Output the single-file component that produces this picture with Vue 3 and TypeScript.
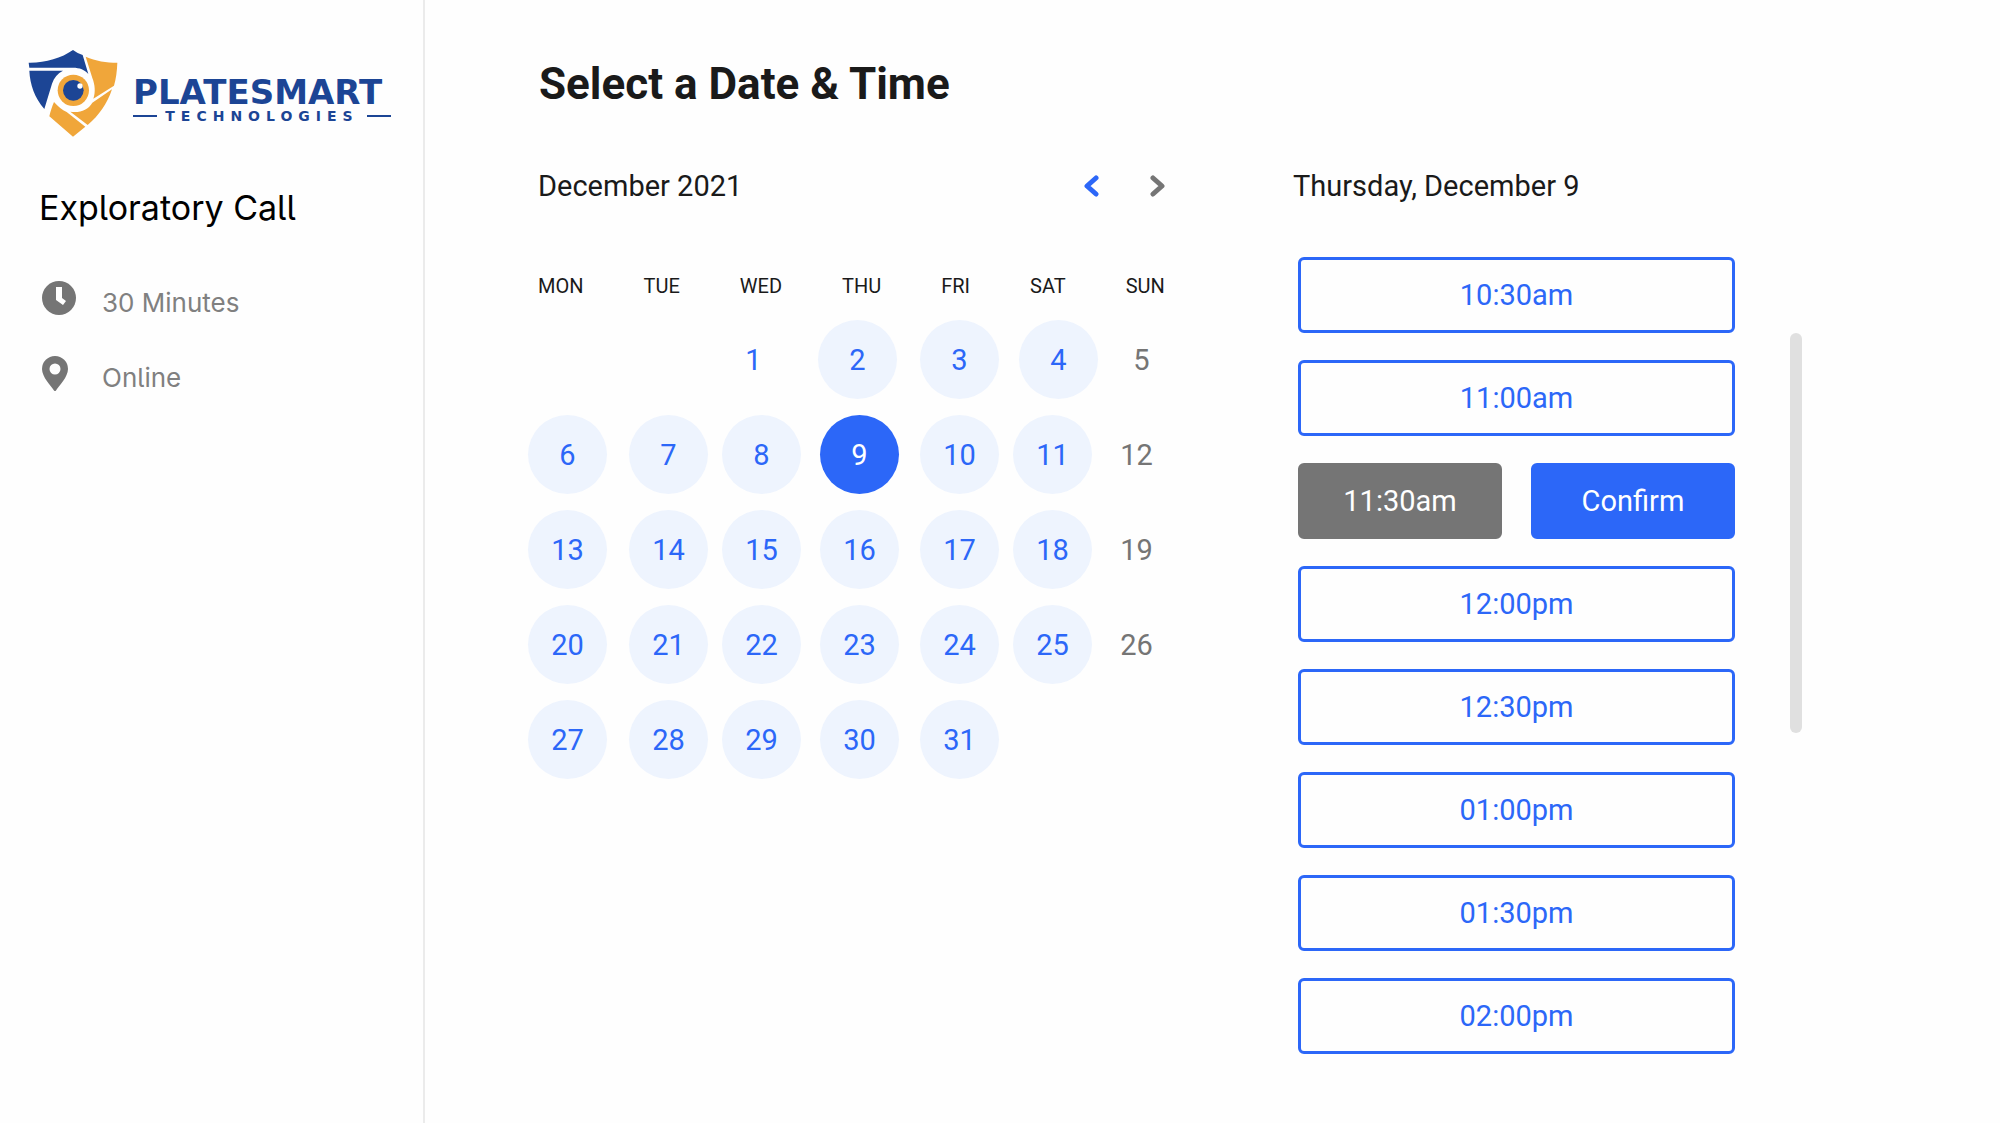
<script setup lang="ts">
import { ref } from 'vue'

interface Day {
  date: number
  state: 'empty' | 'plain' | 'open' | 'closed'
}

const weekdays = ['MON', 'TUE', 'WED', 'THU', 'FRI', 'SAT', 'SUN']
const slots = ['10:30am', '11:00am', '11:30am', '12:00pm', '12:30pm', '01:00pm', '01:30pm', '02:00pm']

const selectedDay = ref(9)
const selectedSlot = ref('11:30am')

// December 2021 starts on a Wednesday, so the first cell is 29 November.
function dayAt(week: number, column: number): Day {
  const date = week * 7 + column - 1
  if (date < 1 || date > 31) return { date, state: 'empty' }
  if (column === 6) return { date, state: 'closed' }
  return { date, state: date === 1 ? 'plain' : 'open' }
}

const weeks: Day[][] = [0, 1, 2, 3, 4].map((week) => weekdays.map((_, column) => dayAt(week, column)))
</script>

<template>
  <div class="page">
    <aside class="sidebar">
      <div class="brand">
        <svg class="shield" viewBox="50 55 279 270" aria-hidden="true">
          <g fill="#1c4595">
            <path d="M55 99C104 100 152 86 188 61C197 68 207 73 217 76L234 133C223 120 208 114 188 114H57Z" />
            <path d="M57 123H158C142 131 131 144 125 162L102 238C73 204 59 165 57 123Z" />
          </g>
          <g fill="#f0a63a">
            <path d="M226 81C256 94 288 99 321 99C320 125 317 147 311 168L249 207C256 188 254 165 246 145Z" />
            <path d="M305 179C290 224 266 257 232 286L180 246C209 250 232 242 246 219Z" />
            <path d="M131 217C144 232 155 240 169 247L225 291L188 321L117 260C120 246 125 231 131 217Z" />
            <circle cx="189" cy="182" r="47" />
          </g>
          <circle cx="189" cy="182" r="31" fill="#1c4595" />
          <circle cx="209" cy="169" r="8" fill="#fff" />
        </svg>
        <div class="wordmark">
          <span class="name">PLATESMART</span>
          <span class="tagline">TECHNOLOGIES</span>
        </div>
      </div>
      <h2 class="event">Exploratory Call</h2>
      <ul class="facts">
        <li>
          <svg width="34" height="34" viewBox="0 0 34 34" aria-hidden="true">
            <circle cx="17" cy="17" r="17" fill="#757575" />
            <path d="M14 6H20V17L24 20L21 24L14 19Z" fill="#fff" />
          </svg>
          <span>30 Minutes</span>
        </li>
        <li>
          <svg width="34" height="35" viewBox="0 0 34 35" aria-hidden="true">
            <path
              fill="#757575"
              fill-rule="evenodd"
              d="M13 0A13 13 0 0 1 26 13C26 21 17 30 14 34.400Q13 35.400 12 34.400C9 30 0 21 0 13A13 13 0 0 1 13 0ZM13 7.500A5.500 5.500 0 1 0 13 18.500A5.500 5.500 0 1 0 13 7.500Z"
            />
          </svg>
          <span>Online</span>
        </li>
      </ul>
    </aside>

    <main class="content">
      <h1 class="title">Select a Date &amp; Time</h1>
      <div class="panels">
        <section class="calendar">
          <header class="month">
            <h2 class="subtitle">December 2021</h2>
            <div class="arrows">
              <button type="button" class="prev" aria-label="Previous month">
                <svg width="15" height="22" viewBox="0 0 15 22"><path d="M12 3L3 11L12 19" /></svg>
              </button>
              <button type="button" class="next" aria-label="Next month">
                <svg width="15" height="22" viewBox="0 0 15 22"><path d="M3 3L12 11L3 19" /></svg>
              </button>
            </div>
          </header>
          <table>
            <thead>
              <tr class="weekdays">
                <th v-for="name in weekdays" :key="name" scope="col">{{ name }}</th>
              </tr>
            </thead>
            <tbody>
              <tr v-for="(week, index) in weeks" :key="index" class="week" :class="{ first: index === 0 }">
                <td v-for="day in week" :key="day.date">
                  <button
                    v-if="day.state !== 'empty'"
                    type="button"
                    class="day"
                    :class="[day.state, { selected: day.date === selectedDay }]"
                    :disabled="day.state === 'closed'"
                    @click="selectedDay = day.date"
                  >
                    {{ day.date }}
                  </button>
                </td>
              </tr>
            </tbody>
          </table>
        </section>

        <section class="times">
          <h2 class="subtitle">Thursday, December {{ selectedDay }}</h2>
          <div class="scroller">
            <ul class="slots">
              <li v-for="slot in slots" :key="slot">
                <template v-if="slot === selectedSlot">
                  <button type="button" class="slot chosen">{{ slot }}</button>
                  <button type="button" class="slot confirm">Confirm</button>
                </template>
                <button v-else type="button" class="slot" @click="selectedSlot = slot">{{ slot }}</button>
              </li>
            </ul>
            <div class="scrollbar"></div>
          </div>
        </section>
      </div>
    </main>
  </div>
</template>

<style>
body {
  margin: 0;
  background: #fefefe;
}
</style>

<style scoped>
.page {
  display: flex;
  min-height: 100vh;
  font-family: Roboto, 'Liberation Sans', sans-serif;
  font-size: 29px;
  color: #1a1a1a;
}

h1,
h2,
ul {
  margin: 0;
  padding: 0;
  list-style: none;
}

button {
  padding: 0;
  border: 0;
  background: none;
  font: inherit;
  cursor: pointer;
}

.sidebar {
  box-sizing: border-box;
  flex: 0 0 425px;
  padding: 48px 32px 0 27px;
  border-right: 2px solid #ebebeb;
  font-family: Inter, 'Liberation Sans', sans-serif;
  font-feature-settings: 'cv05';
}

.brand {
  display: flex;
  gap: 13px;
}

.shield {
  width: 93px;
  height: 90px;
}

.wordmark {
  display: flex;
  flex: 1;
  flex-direction: column;
  padding-top: 28px;
  font-family: 'DejaVu Sans', sans-serif;
  font-weight: 700;
  color: #1c4595;
}

.name {
  font-size: 34px;
  line-height: 32px;
}

.tagline {
  display: flex;
  align-items: center;
  gap: 8px;
  font-size: 14px;
  line-height: 16px;
  letter-spacing: 6px;
}

.tagline::before,
.tagline::after {
  content: '';
  flex: 1;
  height: 2px;
  background: #1c4595;
}

.event {
  margin: 48px 0 0 12px;
  font-size: 34px;
  font-weight: 400;
  line-height: 44px;
  color: #000;
}

.facts {
  display: flex;
  flex-direction: column;
  gap: 31px;
  margin: 51px 0 0 15px;
  font-size: 26px;
  line-height: 44px;
  color: #808080;
}

.facts li {
  display: flex;
  gap: 26px;
}

.content {
  flex: 1;
  padding: 55px 198px 0 103px;
}

.title {
  padding-left: 11px;
  font-size: 44px;
  font-weight: 700;
  line-height: 58px;
}

.panels {
  display: flex;
  padding-top: 53px;
}

.subtitle {
  font-size: 29px;
  font-weight: 400;
  line-height: 40px;
}

.calendar {
  flex: 0 0 765px;
}

.month {
  display: flex;
  align-items: center;
  justify-content: space-between;
  padding: 0 128px 0 10px;
}

.arrows {
  display: flex;
  gap: 51px;
}

.arrows button {
  display: flex;
}

.arrows path {
  fill: none;
  stroke-width: 5;
  stroke-linecap: round;
  stroke-linejoin: round;
}

.prev {
  stroke: #2c67f8;
}

.next {
  stroke: #757575;
}

table,
thead,
tbody {
  display: block;
}

.weekdays {
  display: flex;
  gap: 60px;
  padding: 68px 0 22px 10px;
  font-size: 20px;
  line-height: 24px;
}

th {
  padding: 0;
  font-weight: 400;
}

.week {
  display: grid;
  grid-template-columns: 101px 93px 98px 100px 93px 84px 79px;
  height: 95px;
}

.week.first {
  grid-template-columns: 101px 85px 104px 102px 99px 83px 79px;
}

td {
  padding: 0;
}

.day {
  width: 79px;
  height: 79px;
  padding-top: 1px;
  border-radius: 50%;
  color: #2c67f8;
}

.day.open {
  background: #eef4fe;
}

.day.closed {
  color: #757575;
}

.day.selected {
  background: #2c67f8;
  color: #fff;
}

.times {
  flex: 1;
}

.scroller {
  display: flex;
  gap: 55px;
  padding: 51px 0 0 5px;
}

.slots {
  display: flex;
  flex: 1;
  flex-direction: column;
  gap: 27px;
}

.slots li {
  display: flex;
  gap: 29px;
}

.slot {
  box-sizing: border-box;
  flex: 1;
  height: 76px;
  border: 3px solid #2c67f8;
  border-radius: 6px;
  color: #2c67f8;
}

.slot.chosen {
  border-color: #757575;
  background: #757575;
  color: #fff;
}

.slot.confirm {
  background: #2c67f8;
  color: #fff;
}

.scrollbar {
  width: 12px;
  height: 400px;
  margin-top: 76px;
  border-radius: 6px;
  background: #e0e0e0;
}
</style>
